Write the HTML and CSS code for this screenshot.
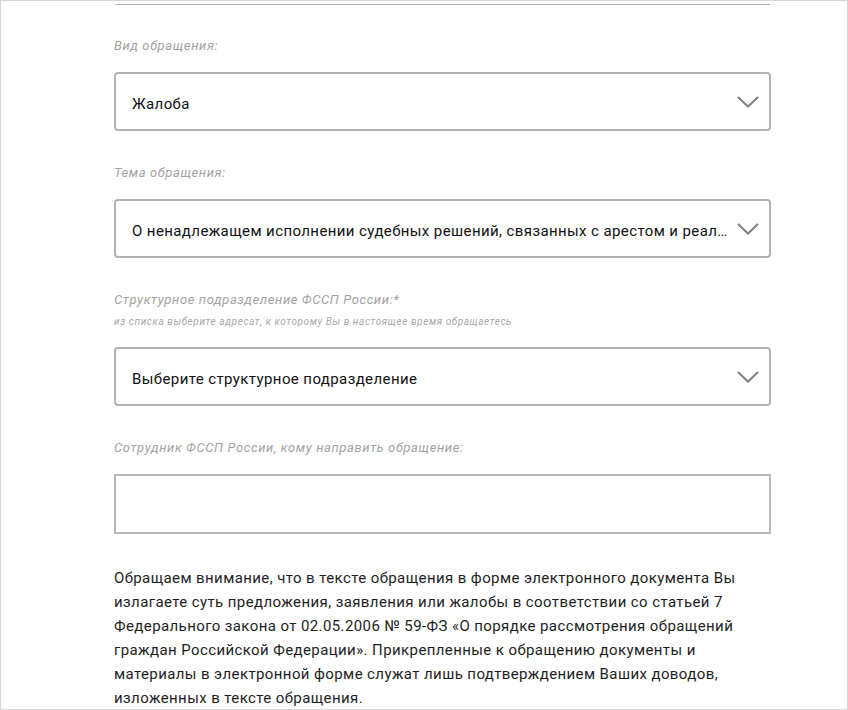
FILE: index.html
```html
<!DOCTYPE html>
<html lang="ru">
<head>
<meta charset="utf-8">
<title>Обращение</title>
<link rel="stylesheet" href="styles.css">
</head>
<body>
<div class="frame">
  <div class="form">
    <div class="divider"></div>

    <div class="field field-first">
      <div class="label">Вид обращения:</div>
      <div class="select">
        <span class="select-value">Жалоба</span>
        <svg class="chevron" width="22" height="12" viewBox="0 0 22 12"><path d="M1 1 L11 10.5 L21 1" fill="none" stroke="#808080" stroke-width="2"/></svg>
      </div>
    </div>

    <div class="field">
      <div class="label">Тема обращения:</div>
      <div class="select">
        <span class="select-value">О ненадлежащем исполнении судебных решений, связанных с арестом и реализацией имущества должника</span>
        <svg class="chevron" width="22" height="12" viewBox="0 0 22 12"><path d="M1 1 L11 10.5 L21 1" fill="none" stroke="#808080" stroke-width="2"/></svg>
      </div>
    </div>

    <div class="field">
      <div class="label label-with-hint">Структурное подразделение ФССП России:*</div>
      <div class="hint">из списка выберите адресат, к которому Вы в настоящее время обращаетесь</div>
      <div class="select">
        <span class="select-value">Выберите структурное подразделение</span>
        <svg class="chevron" width="22" height="12" viewBox="0 0 22 12"><path d="M1 1 L11 10.5 L21 1" fill="none" stroke="#808080" stroke-width="2"/></svg>
      </div>
    </div>

    <div class="field">
      <div class="label">Сотрудник ФССП России, кому направить обращение:</div>
      <div class="input"></div>
    </div>

    <p class="notice">Обращаем внимание, что в тексте обращения в форме электронного документа Вы излагаете суть предложения, заявления или жалобы в соответствии со статьей 7 Федерального закона от 02.05.2006 № 59-ФЗ «О порядке рассмотрения обращений граждан Российской Федерации». Прикрепленные к обращению документы и материалы в электронной форме служат лишь подтверждением Ваших доводов, изложенных в тексте обращения.</p>
  </div>
</div>
</body>
</html>
```

FILE: styles.css
```css
* { box-sizing: border-box; }
html, body {
  margin: 0;
  padding: 0;
  background: #ffffff;
}
body {
  font-family: Roboto, "Liberation Sans", Arial, sans-serif;
  color: #1e1e1e;
  letter-spacing: 0.4px;
}
.frame {
  width: 848px;
  height: 710px;
  border: 1px solid #d6d6d6;
  overflow: hidden;
}
.form {
  width: 657px;
  margin-left: 113px;
  padding-top: 3px;
}
.divider {
  height: 1px;
  background: #b4b4b4;
  margin-left: 1px;
  margin-right: 1px;
}
.field {
  margin-top: 33px;
}
.field-first {
  margin-top: 32px;
}
.label {
  font-size: 13px;
  font-style: italic;
  line-height: 18px;
  letter-spacing: 0.6px;
  color: #a3a3a3;
  margin-bottom: 17px;
}
.label-with-hint {
  margin-bottom: 6px;
}
.hint {
  font-size: 10px;
  font-style: italic;
  line-height: 14px;
  letter-spacing: 0.6px;
  color: #a8a8a8;
  margin-bottom: 18px;
}
.select {
  height: 59px;
  border: 2px solid #b3b3b3;
  border-radius: 4px;
  display: flex;
  align-items: center;
  padding: 0 10px 0 16px;
}
.select-value {
  flex: 1;
  min-width: 0;
  font-size: 15px;
  color: #111;
  white-space: nowrap;
  overflow: hidden;
  text-overflow: ellipsis;
  padding-top: 4px;
  padding-right: 8px;
}
.chevron {
  flex: none;
  display: block;
}
.input {
  height: 60px;
  border: 2px solid #b8b8b8;
}
.notice {
  margin: 32px 0 0;
  font-size: 15px;
  line-height: 24px;
  color: #1e1e1e;
}
```
